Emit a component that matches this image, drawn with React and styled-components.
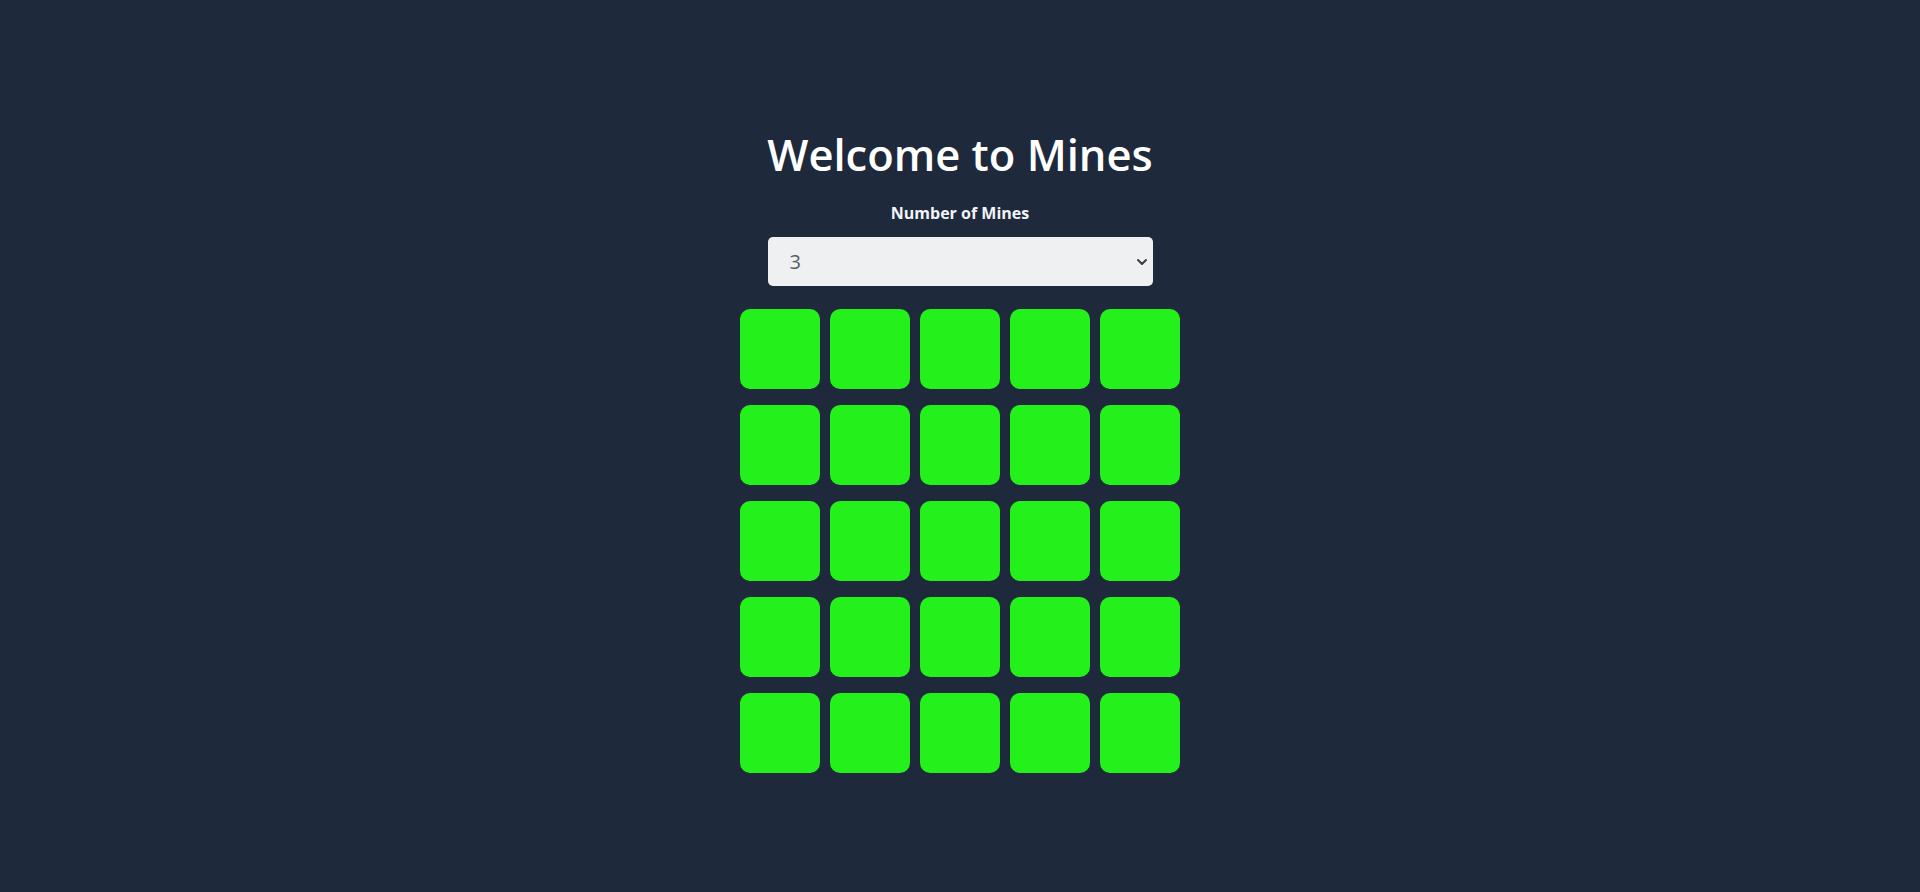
import React, { useState } from "react";
import styled, { createGlobalStyle } from "styled-components";

const GlobalStyle = createGlobalStyle`
    html, body {
        margin: 0;
        padding: 0;
        background: #1e293b;
    }
    body {
        font-family: "Open Sans", "Noto Sans", sans-serif;
        color: #ffffff;
    }
`;

const S = {
    Page: styled.div`
        min-height: 892px;
        display: flex;
        flex-flow: column;
        align-items: center;
        padding-top: 131px;
        box-sizing: border-box;
        background: #1e293b;
    `,
    Title: styled.h1`
        margin: 0;
        font-size: 43.5px;
        line-height: 48px;
        font-weight: 600;
        color: #ffffff;
    `,
    Label: styled.label`
        margin-top: 24px;
        font-size: 16px;
        line-height: 20px;
        font-weight: 700;
        color: #f1f5f9;
    `,
    SelectWrap: styled.div`
        position: relative;
        margin-top: 14px;
        width: 385px;
    `,
    Select: styled.select`
        appearance: none;
        -webkit-appearance: none;
        display: block;
        width: 100%;
        height: 49px;
        padding: 0 40px 0 22px;
        border: none;
        border-radius: 5px;
        background: #eff0f1;
        color: #565c66;
        font-family: "Open Sans", "Noto Sans", sans-serif;
        font-size: 20px;
        outline: none;
    `,
    Chevron: styled.svg`
        position: absolute;
        right: 5px;
        top: 19px;
        width: 12px;
        height: 12px;
        pointer-events: none;
    `,
    Board: styled.div`
        margin-top: 23px;
        display: grid;
        grid-template-columns: repeat(5, 80px);
        column-gap: 10px;
        row-gap: 16px;
    `,
    Tile: styled.button`
        width: 80px;
        height: 80px;
        border: none;
        padding: 0;
        border-radius: 10px;
        background: ${props => props.revealed ? "#334155" : "#24f01b"};
        cursor: pointer;
    `,
};

export default function App() {
    const [mines, setMines] = useState("3");
    const tiles = Array.from({ length: 25 }, (_, i) => i);

    return (
        <>
            <GlobalStyle />
            <S.Page>
                <S.Title>Welcome to Mines</S.Title>
                <S.Label htmlFor="mines">Number of Mines</S.Label>
                <S.SelectWrap>
                    <S.Select id="mines" value={mines} onChange={e => setMines(e.target.value)}>
                        {Array.from({ length: 24 }, (_, i) => i + 1).map(n => (
                            <option key={n} value={String(n)}>{n}</option>
                        ))}
                    </S.Select>
                    <S.Chevron viewBox="0 0 12 12">
                        <path d="M2 4 L6 8 L10 4" fill="none" stroke="#3a3f47" strokeWidth="2" strokeLinecap="round" strokeLinejoin="round" />
                    </S.Chevron>
                </S.SelectWrap>
                <S.Board>
                    {tiles.map(i => <S.Tile key={i} />)}
                </S.Board>
            </S.Page>
        </>
    );
}
